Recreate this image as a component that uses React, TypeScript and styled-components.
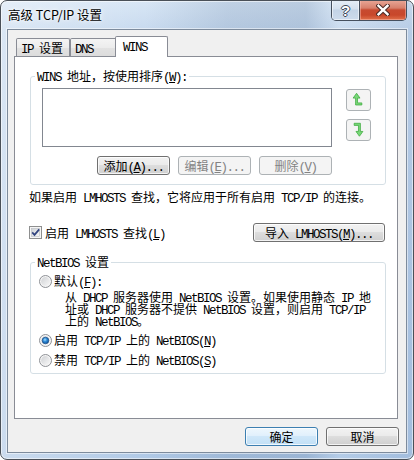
import React from 'react';
import styled, { createGlobalStyle } from 'styled-components';

const GlobalStyle = createGlobalStyle`
  html, body { margin: 0; padding: 0; background: #ffffff; }
  body {
    font-family: "Noto Sans CJK SC", "Liberation Sans", sans-serif;
    font-size: 12px;
    color: #000000;
  }
  * { box-sizing: border-box; }
`;

/* ---------- text helpers (SimSun-like: 12px CJK, 6px half-width Latin) ---------- */

const LatinRun = styled.span<{ $u?: boolean }>`
  font-family: "Liberation Mono", "DejaVu Sans Mono", monospace;
  font-size: 12.5px;
  line-height: 7px;
  letter-spacing: -1.5px;
  white-space: pre;
  text-decoration: ${(p) => (p.$u ? 'underline' : 'none')};
  text-underline-offset: 1px;
`;

function Txt({ s }: { s: string }) {
  type Run = { t: string; lat: boolean; u: boolean };
  const runs: Run[] = [];
  for (let i = 0; i < s.length; i++) {
    let ch = s[i];
    let u = false;
    if (ch === '&' && i + 1 < s.length) {
      i += 1;
      ch = s[i];
      u = true;
    }
    const lat = ch.charCodeAt(0) < 0x80;
    const last = runs[runs.length - 1];
    if (last && !u && !last.u && last.lat === lat) last.t += ch;
    else runs.push({ t: ch, lat, u });
  }
  return (
    <>
      {runs.map((r, i) =>
        r.lat ? (
          <LatinRun key={i} $u={r.u}>
            {r.t}
          </LatinRun>
        ) : (
          <React.Fragment key={i}>{r.t}</React.Fragment>
        )
      )}
    </>
  );
}

/* ---------- window frame ---------- */

const Window = styled.div`
  width: 414px;
  height: 460px;
  border: 1px solid #4a5058;
  border-radius: 7px;
  padding: 0 6px 6px;
  display: flex;
  flex-direction: column;
  overflow: hidden;
  background:
    linear-gradient(90deg, rgba(255,255,255,0.35) 0%, rgba(255,255,255,0) 35%, rgba(70,100,140,0.16) 55%, rgba(70,100,140,0.2) 74%, rgba(255,255,255,0.05) 82%, rgba(60,100,160,0.12) 100%),
    linear-gradient(180deg, #d8e6f5 0%, #c6d9ee 7%, #bad0ea 55%, #b0c9e6 100%);
  box-shadow: inset 0 0 0 1px rgba(255,255,255,0.55);
`;

const TitleBar = styled.div`
  height: 28px;
  display: flex;
  align-items: flex-start;
  justify-content: space-between;
`;

const TitleText = styled.div`
  margin-top: 6px;
  padding-left: 1px;
  line-height: 16px;
  font-size: 12.5px;
  color: #000;
  text-shadow: 0 0 6px rgba(255,255,255,0.95), 0 0 3px rgba(255,255,255,0.9);
`;

const CaptionGroup = styled.div`
  display: flex;
  height: 21px;
  margin-top: -1px;
  border: 1px solid #46505e;
  border-top: none;
  border-radius: 0 0 5px 5px;
  overflow: hidden;
`;

const HelpButton = styled.div`
  width: 28px;
  height: 100%;
  border-right: 1px solid #46505e;
  background: linear-gradient(180deg, #e6eef7 0%, #d5e1ee 45%, #c3d3e6 50%, #cddbec 100%);
  box-shadow: inset 0 0 0 1px rgba(255,255,255,0.55);
  display: flex;
  align-items: center;
  justify-content: center;
  font-family: "Liberation Sans", sans-serif;
  font-weight: bold;
  font-size: 15px;
  line-height: 15px;
  color: #ffffff;
  text-shadow: 1px 0 0 #3a4656, -1px 0 0 #3a4656, 0 1px 0 #3a4656, 0 -1px 0 #3a4656;
`;

const CloseButton = styled.div`
  width: 46px;
  height: 100%;
  background: linear-gradient(180deg, #e9a898 0%, #d7806c 40%, #c74a30 50%, #c8472b 75%, #e0704a 100%);
  box-shadow: inset 0 0 0 1px rgba(255,200,190,0.45);
  display: flex;
  align-items: center;
  justify-content: center;
`;

const Client = styled.div`
  width: 400px;
  height: 424px;
  border: 1px solid #7d8b9c;
  background: #f0f0f0;
  box-shadow: 0 0 0 1px rgba(255,255,255,0.5);
  padding: 6px 0 0 6px;
  display: flex;
  flex-direction: column;
`;

/* ---------- tabs ---------- */

const TabStrip = styled.div`
  display: flex;
  align-items: flex-end;
  height: 20px;
  padding-left: 2px;
`;

const Tab = styled.div<{ $w: number; $active?: boolean }>`
  position: relative;
  width: ${(p) => p.$w + (p.$active ? 4 : 0)}px;
  height: ${(p) => (p.$active ? 21 : 18)}px;
  margin: ${(p) => (p.$active ? '0 -2px -1px -2px' : '0')};
  z-index: ${(p) => (p.$active ? 1 : 0)};
  border: 1px solid #898c95;
  border-bottom: none;
  border-radius: 2px 2px 0 0;
  padding: 2px 0 0 ${(p) => (p.$active ? 7 : 4)}px;
  line-height: 13px;
  white-space: nowrap;
  background: ${(p) =>
    p.$active ? '#ffffff' : 'linear-gradient(180deg, #f4f4f4 0%, #ececec 50%, #e2e2e2 51%, #dcdcdc 100%)'};
`;

const Panel = styled.div`
  width: 384px;
  height: 363px;
  border: 1px solid #898c95;
  background: #ffffff;
  display: flex;
  flex-direction: column;
`;

/* ---------- group boxes ---------- */

const Group = styled.fieldset<{ $top: number }>`
  margin: ${(p) => p.$top}px 11px 0 15px;
  padding: 0;
  border: 1px solid #d5dfe5;
  border-radius: 3px;
  min-width: 0;
`;

const GroupLabel = styled.legend`
  margin-left: 4px;
  padding: 0 2px;
  height: 12px;
  line-height: 12px;
  font-size: 12px;
  white-space: nowrap;
`;

const GroupBody = styled.div<{ $pad: string }>`
  padding: ${(p) => p.$pad};
`;

const ListRow = styled.div`
  display: flex;
  align-items: flex-start;
`;

const ListBox = styled.div`
  width: 290px;
  height: 59px;
  border: 1px solid #828790;
  background: #ffffff;
`;

const ArrowColumn = styled.div`
  display: flex;
  flex-direction: column;
  gap: 8px;
  margin: 1px 0 0 14px;
`;

const ArrowButton = styled.div`
  width: 25px;
  height: 22px;
  border: 1px solid #adb2b5;
  border-radius: 3px;
  background: #f4f4f4;
  display: flex;
  align-items: center;
  justify-content: center;
`;

const ButtonRow = styled.div`
  display: flex;
  justify-content: flex-end;
  gap: 8px;
  width: 290px;
  margin-top: 9px;
`;

const PushButton = styled.button<{ $w: number; $default?: boolean }>`
  width: ${(p) => p.$w}px;
  height: 19px;
  margin: 0;
  padding: 0;
  border: 1px solid ${(p) => (p.$default ? '#3c7fb1' : '#707070')};
  border-radius: 3px;
  background: ${(p) =>
    p.$default
      ? 'linear-gradient(180deg, #eef7fd 0%, #e1f0fc 45%, #cfe7f9 50%, #c2e0f6 100%)'
      : 'linear-gradient(180deg, #f2f2f2 0%, #ebebeb 45%, #dddddd 50%, #cfcfcf 100%)'};
  box-shadow: inset 0 0 0 1px rgba(255,255,255,0.75);
  font-family: inherit;
  font-size: 12px;
  line-height: 17px;
  color: #000000;
  text-align: center;
  white-space: nowrap;
  &:disabled {
    border-color: #adb2b5;
    background: #f4f4f4;
    box-shadow: none;
    color: #838383;
  }
`;

const InfoText = styled.div`
  margin: 6px 0 0 14px;
  height: 12px;
  line-height: 12px;
  white-space: nowrap;
`;

const CheckRow = styled.div`
  display: flex;
  align-items: center;
  justify-content: space-between;
  height: 19px;
  margin: 20px 12px 0 14px;
`;

const CheckLabel = styled.div`
  display: flex;
  align-items: center;
  gap: 3px;
  line-height: 12px;
  white-space: nowrap;
`;

const RadioRow = styled.div<{ $gap: number }>`
  display: flex;
  align-items: center;
  gap: 2px;
  height: 14px;
  margin-top: ${(p) => p.$gap}px;
  line-height: 12px;
  white-space: nowrap;
`;

const Description = styled.div`
  margin: 3px 0 0 26px;
`;

const DescLine = styled.div`
  line-height: 12px;
  height: 12px;
  white-space: nowrap;
`;

const Footer = styled.div`
  display: flex;
  justify-content: flex-end;
  gap: 8px;
  margin-top: 8px;
  padding-right: 7px;
`;

/* ---------- drawings ---------- */

const CloseGlyph = () => (
  <svg width="14" height="12" viewBox="0 0 14 12">
    <path d="M2.5 1.8 L11.5 10.2 M11.5 1.8 L2.5 10.2" stroke="#4a2a26" strokeWidth="4.4" strokeLinecap="square" />
    <path d="M2.5 1.8 L11.5 10.2 M11.5 1.8 L2.5 10.2" stroke="#ffffff" strokeWidth="2.4" strokeLinecap="square" />
  </svg>
);

const UpGlyph = () => (
  <svg width="25" height="22" viewBox="0 0 25 22" style={{ marginLeft: -1, marginTop: -1 }}>
    <path
      d="M11 4 L14.6 9 L12 9 L12 14 L16.5 14 L16.5 16.2 L10 16.2 L10 9 L7.4 9 Z"
      fill="#79d879"
      stroke="#3eaa3e"
      strokeWidth="0.8"
      strokeLinejoin="round"
    />
  </svg>
);

const DownGlyph = () => (
  <svg width="25" height="22" viewBox="0 0 25 22" style={{ marginLeft: -1, marginTop: -1 }}>
    <path
      d="M14 17.5 L10.4 12.5 L13 12.5 L13 6.2 L8.5 6.2 L8.5 4 L15 4 L15 12.5 L17.6 12.5 Z"
      fill="#79d879"
      stroke="#3eaa3e"
      strokeWidth="0.8"
      strokeLinejoin="round"
    />
  </svg>
);

const CheckBoxGlyph = () => (
  <svg width="13" height="13" viewBox="0 0 13 13">
    <defs>
      <linearGradient id="cbfill" x1="0" y1="0" x2="1" y2="1">
        <stop offset="0" stopColor="#cdd1d6" />
        <stop offset="1" stopColor="#f7f7f7" />
      </linearGradient>
    </defs>
    <rect x="0.5" y="0.5" width="12" height="12" fill="#f6f6f6" stroke="#8e8f8f" />
    <rect x="2.5" y="2.5" width="8" height="8" fill="url(#cbfill)" stroke="#b9bcc1" strokeWidth="0.6" />
    <path d="M3.2 6.4 L5.5 8.9 L10.2 3.4" fill="none" stroke="#31447f" strokeWidth="1.7" />
  </svg>
);

const RadioGlyph = ({ checked }: { checked?: boolean }) => (
  <svg width="13" height="13" viewBox="0 0 13 13">
    <defs>
      <linearGradient id="rdfill" x1="0" y1="0" x2="1" y2="1">
        <stop offset="0" stopColor="#d0d2d5" />
        <stop offset="1" stopColor="#f8f8f8" />
      </linearGradient>
      <radialGradient id="rddot" cx="0.42" cy="0.38" r="0.65">
        <stop offset="0" stopColor="#a6e0ff" />
        <stop offset="0.45" stopColor="#2f8ad6" />
        <stop offset="1" stopColor="#0c4f95" />
      </radialGradient>
    </defs>
    <circle cx="6.5" cy="6.5" r="6" fill="#f4f4f4" stroke="#8e9196" />
    <circle cx="6.5" cy="6.5" r="4.4" fill="url(#rdfill)" />
    {checked && <circle cx="6.5" cy="6.5" r="3.3" fill="url(#rddot)" stroke="#1b4d86" strokeWidth="0.7" />}
  </svg>
);

/* ---------- app ---------- */

export default function App() {
  return (
    <>
      <GlobalStyle />
      <Window>
        <TitleBar>
          <TitleText>高级 TCP/IP 设置</TitleText>
          <CaptionGroup>
            <HelpButton>?</HelpButton>
            <CloseButton>
              <CloseGlyph />
            </CloseButton>
          </CaptionGroup>
        </TitleBar>
        <Client>
          <TabStrip>
            <Tab $w={54}>
              <Txt s="IP 设置" />
            </Tab>
            <Tab $w={47}>
              <Txt s="DNS" />
            </Tab>
            <Tab $w={49} $active>
              <Txt s="WINS" />
            </Tab>
          </TabStrip>
          <Panel>
            <Group $top={13}>
              <GroupLabel>
                <Txt s="WINS 地址，按使用排序(&W):" />
              </GroupLabel>
              <GroupBody $pad="6px 0 9px 11px">
                <ListRow>
                  <ListBox />
                  <ArrowColumn>
                    <ArrowButton>
                      <UpGlyph />
                    </ArrowButton>
                    <ArrowButton>
                      <DownGlyph />
                    </ArrowButton>
                  </ArrowColumn>
                </ListRow>
                <ButtonRow>
                  <PushButton $w={73}>
                    <Txt s="添加(&A)..." />
                  </PushButton>
                  <PushButton $w={73} disabled>
                    <Txt s="编辑(&E)..." />
                  </PushButton>
                  <PushButton $w={73} disabled>
                    <Txt s="删除(&V)" />
                  </PushButton>
                </ButtonRow>
              </GroupBody>
            </Group>

            <InfoText>
              <Txt s="如果启用 LMHOSTS 查找，它将应用于所有启用 TCP/IP 的连接。" />
            </InfoText>

            <CheckRow>
              <CheckLabel>
                <CheckBoxGlyph />
                <span>
                  <Txt s="启用 LMHOSTS 查找(&L)" />
                </span>
              </CheckLabel>
              <PushButton $w={132}>
                <Txt s="导入 LMHOSTS(&M)..." />
              </PushButton>
            </CheckRow>

            <Group $top={14}>
              <GroupLabel>
                <Txt s="NetBIOS 设置" />
              </GroupLabel>
              <GroupBody $pad="6px 0 6px 8px">
                <RadioRow $gap={0}>
                  <RadioGlyph />
                  <span>
                    <Txt s="默认(&F):" />
                  </span>
                </RadioRow>
                <Description>
                  <DescLine>
                    <Txt s="从 DHCP 服务器使用 NetBIOS 设置。如果使用静态 IP 地" />
                  </DescLine>
                  <DescLine>
                    <Txt s="址或 DHCP 服务器不提供 NetBIOS 设置，则启用 TCP/IP" />
                  </DescLine>
                  <DescLine>
                    <Txt s="上的 NetBIOS。" />
                  </DescLine>
                </Description>
                <RadioRow $gap={6}>
                  <RadioGlyph checked />
                  <span>
                    <Txt s="启用 TCP/IP 上的 NetBIOS(&N)" />
                  </span>
                </RadioRow>
                <RadioRow $gap={6}>
                  <RadioGlyph />
                  <span>
                    <Txt s="禁用 TCP/IP 上的 NetBIOS(&S)" />
                  </span>
                </RadioRow>
              </GroupBody>
            </Group>
          </Panel>
          <Footer>
            <PushButton $w={73} $default>
              确定
            </PushButton>
            <PushButton $w={73}>取消</PushButton>
          </Footer>
        </Client>
      </Window>
    </>
  );
}
